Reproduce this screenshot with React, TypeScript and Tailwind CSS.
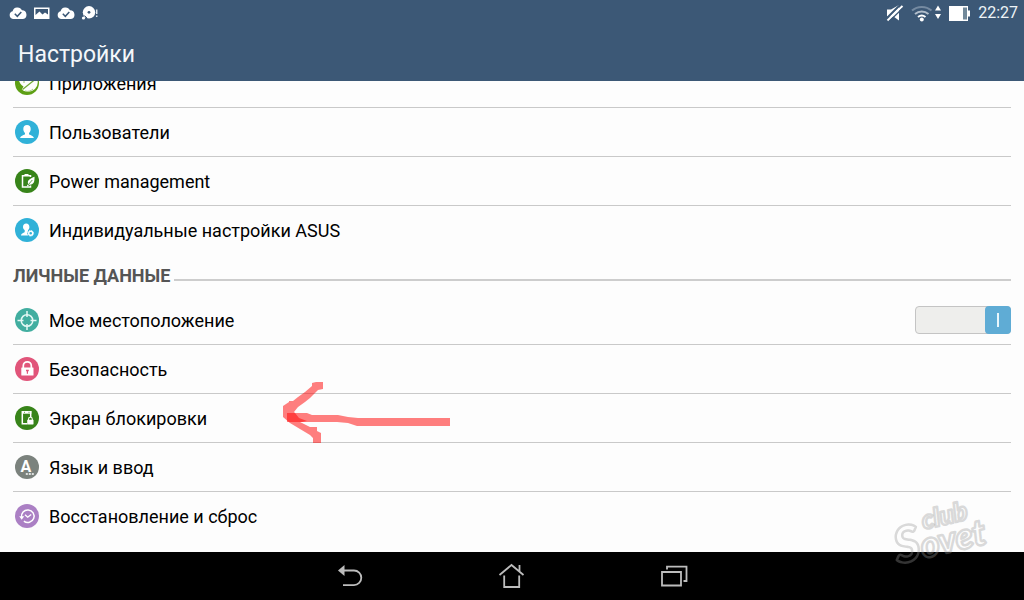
import { useState, type ReactNode } from 'react';

function Badge({ color, children }: { color: string; children: ReactNode }) {
  return (
    <svg viewBox="0 0 24 24" className="size-6 shrink-0" fill="none" aria-hidden="true">
      <circle cx="12" cy="12" r="12" fill={color} />
      {children}
    </svg>
  );
}

const icons = {
  apps: (
    <Badge color="#5d9f14">
      <circle cx="13" cy="11" r="9.800" fill="#fdfdfd" />
      <path d="M3.500 8C4.500 12 6 14 8.500 15.500L6.500 19C3 16.500 2 12 3.500 8Z" fill="#5d9f14" />
      <path d="M7.500 18.500 20 8.500" stroke="#6fa935" strokeWidth="1.200" />
      <circle cx="9" cy="11" r=".8" fill="#8dbc5c" />
      <path d="M10 20c3 1 6 0 8-2" stroke="#a6ca80" strokeWidth="1" />
    </Badge>
  ),
  users: (
    <Badge color="#30b1d8">
      <path
        d="M12 5c2.300 0 3.700 1.600 3.700 4 0 1.600-.7 3-1.700 3.900v1.300c.2.700 4.600 1.200 4.900 3.800H5.100c.3-2.600 4.700-3.100 4.900-3.800v-1.300C9 12 8.300 10.600 8.300 9c0-2.400 1.400-4 3.700-4Z"
        fill="#fff"
      />
    </Badge>
  ),
  power: (
    <Badge color="#38841a">
      <path d="M15.500 8V6.800h-8V18h8v-1.500" stroke="#fff" strokeWidth="1.500" />
      <path d="M9.500 5h4v2h-4Z" fill="#fff" />
      <path d="M19.500 7.800c.3 4.700-.8 8.400-5.300 7.900l-1.400 1.700-.9-.7 1.200-1.700c-1.200-4.300 2.600-5.500 6.400-7.200Z" fill="#fff" />
      <path d="m13 16 4.300-5" stroke="#38841a" strokeWidth=".8" />
    </Badge>
  ),
  custom: (
    <Badge color="#30b1d8">
      <path
        d="M11.200 5.500c2 0 3.200 1.400 3.200 3.400 0 1.300-.5 2.400-1.300 3.200l-.2 1.200c-.8 1.300-.8 2.900.2 4.200H6c.2-2.300 3.500-2.700 3.700-3.500v-1.900C8.600 11.300 8 10.200 8 8.900c0-2 1.200-3.400 3.200-3.400Z"
        fill="#fff"
      />
      <circle cx="15.700" cy="15.300" r="2" stroke="#fff" strokeWidth="1.400" />
      <circle cx="15.700" cy="15.300" r="2.900" stroke="#fff" strokeWidth=".8" strokeDasharray="1.200 1.100" />
    </Badge>
  ),
  location: (
    <Badge color="#42aea0">
      <circle cx="12" cy="12.500" r="5.800" stroke="#e4f8f4" strokeWidth="1.500" />
      <path d="M12 3v6M12 16v6M2.500 12.500h6M15.500 12.500h6" stroke="#e4f8f4" strokeWidth="1.500" />
    </Badge>
  ),
  security: (
    <Badge color="#e1557a">
      <path d="M8.300 11V8.800a4 4 0 0 1 8 0V11" stroke="#fff" strokeWidth="1.700" />
      <rect x="6.300" y="10.500" width="12.200" height="8" rx=".6" fill="#fff" />
      <path d="M11 12.800h2.800v1.500h-.8v2.500h-1.200v-2.500H11Z" fill="#e1557a" />
    </Badge>
  ),
  lockscreen: (
    <Badge color="#38841a">
      <path d="M15.700 11V5.800H7.300v12h5" stroke="#fff" strokeWidth="1.500" />
      <path d="M7 5h9.400v2.700H7Z" fill="#fff" />
      <path d="M13.500 14v-.8a1.900 1.900 0 0 1 3.800 0v.8" stroke="#fff" strokeWidth="1.100" />
      <rect x="12.200" y="13.700" width="6.300" height="4.700" rx=".4" fill="#fff" />
      <path d="M9 6.300h1M13.500 6.300h1" stroke="#38841a" strokeWidth=".8" />
    </Badge>
  ),
  language: (
    <Badge color="#7b827d">
      <text x="10.800" y="17" textAnchor="middle" fontFamily="Roboto, sans-serif" fontSize="16" fontWeight="700" fill="#fff">
        A
      </text>
      <path d="M10.800 19h2M13.800 19h2M16.800 19h2" stroke="#fff" strokeWidth="1.700" />
    </Badge>
  ),
  backup: (
    <Badge color="#ab80c4">
      <path d="M6.600 13.500a6.300 6.300 0 1 1 2.300 3.700" stroke="#fff" strokeWidth="1.500" />
      <path d="M4.200 12.300h5l-2.500 3.500Z" fill="#fff" />
      <path d="m10 10.800 2.700 2.400 3.500-2.700" stroke="#fff" strokeWidth="1.400" />
    </Badge>
  ),
};

function Row({ icon, label, last }: { icon: ReactNode; label: string; last?: boolean }) {
  return (
    <li className={last ? '' : 'border-b border-[#c9c9c9]'}>
      <a href="#" className="flex h-12 items-center gap-2.5 pl-0.5 text-lg text-black">
        {icon}
        <span className="pt-0.5">{label}</span>
      </a>
    </li>
  );
}

function LocationRow() {
  const [on, setOn] = useState(true);
  return (
    <li className="border-b border-[#c9c9c9]">
      <label className="flex h-12 items-center gap-2.5 pl-0.5 text-lg text-black">
        {icons.location}
        <span className="grow pt-0.5">Мое местоположение</span>
        <input type="checkbox" className="peer sr-only" checked={on} onChange={(e) => setOn(e.target.checked)} />
        <span className="flex h-7 w-24 rounded-sm border border-[#c4c4c4] bg-[#eeeeec] peer-checked:justify-end">
          <span className="-m-px flex w-[26px] items-center justify-center rounded-sm bg-[#5facd5]">
            <span className="h-3.5 w-0.5 bg-[#e8f6fc]" />
          </span>
        </span>
      </label>
    </li>
  );
}

function Cloud() {
  return (
    <svg viewBox="0 0 18 14" className="h-3.5 w-[18px]" fill="none" aria-hidden="true">
      <path d="M4 13a4 4 0 0 1-.4-7.800A5 5 0 0 1 13 4.300 4.400 4.400 0 0 1 14 13Z" fill="#fff" />
      <path d="m5.800 7.800 2.500 2.500 4-4.300" stroke="#3c5876" strokeWidth="1.500" />
    </svg>
  );
}

function StatusBar() {
  return (
    <div className="flex h-[26px] items-center justify-between pl-[9px] pr-1.5">
      <div className="flex items-center gap-1.5">
        <Cloud />
        <svg viewBox="0 0 18 14" className="h-3.5 w-[18px]" fill="none" aria-hidden="true">
          <path d="M1 1.500h15.500V13H1Z" fill="#fff" />
          <path d="M2.500 3h12.500v5.500L12 6.500 9.500 8.500 6.500 5.500 2.500 9Z" fill="#3c5876" />
        </svg>
        <Cloud />
        <svg viewBox="0 0 18 14" className="h-3.5 w-[18px]" fill="none" aria-hidden="true">
          <circle cx="8" cy="6.300" r="6.200" fill="#fff" />
          <circle cx="8" cy="6.300" r="1.400" fill="#3c5876" />
          <path d="m3.500 9.500 2.500 2.500" stroke="#3c5876" strokeWidth="1" />
          <circle cx="2.500" cy="12" r="1.600" fill="#fff" />
          <path d="M15.700 3.500v4.500M15.700 9.500v1.500" stroke="#dfe7ee" strokeWidth="1.500" />
        </svg>
      </div>
      <div className="flex items-center">
        <svg viewBox="0 0 84 20" className="mr-2 h-5 w-[84px]" fill="none" aria-label="Звук выключен, Wi-Fi, батарея" role="img">
          <path d="M1 6.500h4l8-4.500v15.500L7.500 13.500H1Z" fill="#fff" />
          <path d="M.5 15.500 14.500 1.500" stroke="#3c5876" strokeWidth="2" />
          <path d="M1.500 17.500 16.500 3" stroke="#fff" strokeWidth="2" />
          <path d="M3 18.500 17 5" stroke="#3c5876" strokeWidth="1.200" />
          <path d="M26 7.500c5.500-4.800 14-4.800 19.500 0" stroke="#758aa1" strokeWidth="2" />
          <path d="M29 11c4-3.400 9.500-3.400 13.500 0" stroke="#b2becb" strokeWidth="2" />
          <path d="M32 14c2.500-2 5-2 7.500 0" stroke="#fff" strokeWidth="2" />
          <circle cx="35.800" cy="16.500" r="2" fill="#fff" />
          <path d="m52 2.500 3 5h-6ZM52 16l3-5h-6Z" fill="#fff" />
          <path d="M63 3h19v4.500h2v6h-2V18H63Z" fill="#fff" />
          <path d="M77 4.500h4v12h-4Z" fill="#72899a" />
        </svg>
        <span className="text-base leading-5 text-[#eef3f7]">22:27</span>
      </div>
    </div>
  );
}

function NavBar() {
  return (
    <nav className="flex h-12 shrink-0 items-center justify-center gap-[134px] bg-black text-[#bdbdbd]">
      <button type="button" aria-label="Назад" className="flex w-7 justify-center">
        <svg viewBox="0 0 28 28" className="size-7" fill="none">
          <path d="M6 8.500h12a7.300 7.300 0 0 1 0 14.600H7" stroke="currentColor" strokeWidth="1.800" />
          <path d="M2 8.500 8.500 3v11Z" fill="currentColor" />
        </svg>
      </button>
      <button type="button" aria-label="Домой" className="flex w-7 justify-center">
        <svg viewBox="0 0 28 28" className="size-7" fill="none" stroke="currentColor" strokeWidth="1.800">
          <path d="M1.500 13 13.500 3l12 10M21.500 9.500V3" />
          <path d="M6.200 13.500V25h15V13.500" />
        </svg>
      </button>
      <button type="button" aria-label="Недавние приложения" className="flex w-7 justify-center">
        <svg viewBox="0 0 28 28" className="size-7" fill="none" stroke="currentColor" strokeWidth="1.800">
          <path d="M2 10h19v13.500H2Z" />
          <path d="M7 7.500V4.700h19.500V19H23.500" />
        </svg>
      </button>
    </nav>
  );
}

function Arrow() {
  return (
    <svg viewBox="0 0 170 62" className="pointer-events-none absolute left-[269px] top-[322px] h-[62px] w-[170px]" fill="#ff0000" fillOpacity=".5" aria-hidden="true">
      <path d="M41 1v7l-5 1-8 8-5 4-7 5-4 5 1 1h12l5 2h26l10 2 10 1h92v8H75l-9-3-11-1H28l-10 0 10 5h7v4l4 2v10h-8v-5l-3-3-20-12-7-6V25l6-4V20h4l5-4 7-5 7-6V2l4-1Z" />
      <path d="M5 32h8l4 5 8 3-5 1H5Z" />
    </svg>
  );
}

function Watermark() {
  return (
    <svg viewBox="0 0 112 80" className="pointer-events-none absolute bottom-8 right-6 h-20 w-28" aria-label="club Sovet" role="img">
      <g
        fontFamily="Lato, sans-serif"
        fontWeight="900"
        fontStyle="italic"
        strokeLinejoin="round"
        stroke="#969696"
        strokeOpacity=".35"
        strokeWidth="2.500"
        fill="none"
        transform="rotate(-13 56 40)"
      >
        <text x="3" y="65" fontSize="50">
          S<tspan fontSize="36">ovet</tspan>
        </text>
        <text x="36" y="37" fontSize="26">
          club
        </text>
      </g>
    </svg>
  );
}

export default function App() {
  return (
    <div className="relative flex h-screen flex-col overflow-hidden bg-[#fdfdfd] font-[Roboto,'Noto_Sans',sans-serif]">
      <header className="z-10 shrink-0 bg-[#3c5876]">
        <StatusBar />
        <h1 className="flex h-[55px] items-center pl-[18px] pt-1 text-[23px] text-[#f4f7fa]">Настройки</h1>
      </header>
      <main className="min-h-0 grow px-[13px]">
        <div className="relative -mt-[22px]">
          <ul>
            <Row icon={icons.apps} label="Приложения" />
            <Row icon={icons.users} label="Пользователи" />
            <Row icon={icons.power} label="Power management" />
            <Row icon={icons.custom} label="Индивидуальные настройки ASUS" last />
          </ul>
          <div className="flex h-[42px] items-center gap-1 pt-0.5">
            <h2 className="text-lg font-bold text-[#555555]">ЛИЧНЫЕ ДАННЫЕ</h2>
            <div className="mt-2 h-0.5 grow bg-[#cdcdcd]" />
          </div>
          <ul>
            <LocationRow />
            <Row icon={icons.security} label="Безопасность" />
            <Row icon={icons.lockscreen} label="Экран блокировки" />
            <Row icon={icons.language} label="Язык и ввод" />
            <Row icon={icons.backup} label="Восстановление и сброс" last />
          </ul>
          <Arrow />
        </div>
      </main>
      <NavBar />
      <Watermark />
    </div>
  );
}
